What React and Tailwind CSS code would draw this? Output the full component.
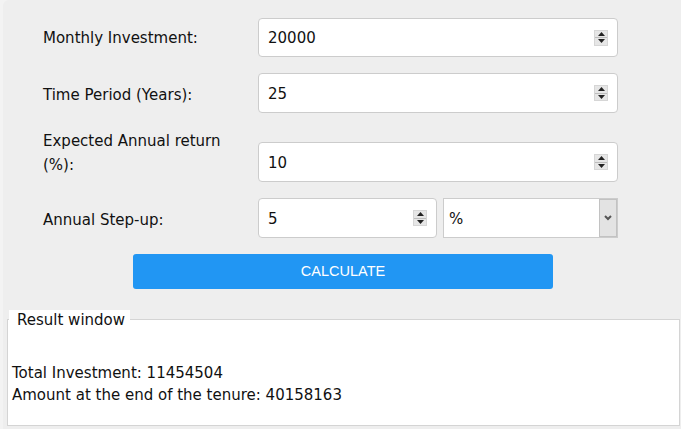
import React, { useState } from 'react';

function Spinner() {
  return (
    <div className="flex flex-col w-[14px] h-[16px] bg-[#e6e6e6] border border-[#d6d6d6]">
      <div className="flex-1 flex items-center justify-center border-b border-[#bdbdbd]">
        <svg width="7" height="4" viewBox="0 0 7 4"><path d="M0 4 L3.5 0 L7 4 Z" fill="#222" /></svg>
      </div>
      <div className="flex-1 flex items-center justify-center">
        <svg width="7" height="4" viewBox="0 0 7 4"><path d="M0 0 L3.5 4 L7 0 Z" fill="#222" /></svg>
      </div>
    </div>
  );
}

function NumberBox({ value, className = '' }) {
  return (
    <div className={`h-10 bg-white border border-[#cccccc] rounded-[4px] flex items-center pl-[9px] pr-[9px] ${className}`}>
      <span className="flex-1 pt-[2px] text-[15px] text-[#111]">{value}</span>
      <Spinner />
    </div>
  );
}

export default function App() {
  const [result] = useState({ total: 11454504, amount: 40158163 });

  return (
    <div className="w-[681px] h-[429px] bg-[#f3f3f3] pl-[3px] overflow-hidden" style={{ fontFamily: '"DejaVu Sans", Verdana, sans-serif' }}>
      <div className="h-full bg-[#eeeeee] rounded-tl-[6px] pt-[18px]">
        {/* FORM */}
        <div className="flex flex-col gap-4 pl-[40px] pr-[63px]">
          <div className="flex items-center">
            <label className="w-[215px] pt-[2px] text-[15px] text-[#111]">Monthly Investment:</label>
            <NumberBox value="20000" className="flex-1 h-[39px]" />
          </div>
          <div className="flex items-center">
            <label className="w-[215px] pt-[4px] text-[15px] text-[#111]">Time Period (Years):</label>
            <NumberBox value="25" className="flex-1" />
          </div>
          <div className="flex items-start">
            <label className="w-[215px] pr-[28px] text-[15px] leading-[24px] text-[#111]">Expected Annual return (%):</label>
            <NumberBox value="10" className="flex-1 mt-[13px]" />
          </div>
          <div className="flex items-center">
            <label className="w-[215px] pt-[4px] text-[15px] text-[#111]">Annual Step-up:</label>
            <NumberBox value="5" className="w-[179px]" />
            <div className="ml-[6px] flex-1 h-10 bg-white border border-[#cccccc] flex items-center">
              <span className="flex-1 pl-[5px] pt-[2px] text-[15px] text-[#111]">%</span>
              <div className="w-[18px] h-full bg-[#e3e3e3] border border-[#c2c2c2] flex items-center justify-center">
                <svg width="8" height="6" viewBox="0 0 8 6"><path d="M1 1 L4 4 L7 1" stroke="#555" strokeWidth="2" fill="none" /></svg>
              </div>
            </div>
          </div>
        </div>

        <div className="pl-[130px] mt-4">
          <button className="w-[420px] h-[35px] bg-[#2196f3] rounded-[3px] text-white text-[14.5px]" style={{ fontFamily: '"Liberation Sans", Arial, sans-serif' }}>
            CALCULATE
          </button>
        </div>

        {/* RESULT */}
        <div className="relative mt-[30px] ml-[4px] mr-[1px] h-[107px] bg-white border border-[#d4d4d4]">
          <span className="absolute left-[1px] top-[-10px] bg-white pl-[8px] pr-[5px] text-[15px] leading-[20px] text-[#111]">Result window</span>
          <div className="pt-[42px] pl-[4px] text-[15px] leading-[22px] text-[#111]">
            <p>Total Investment: {result.total}</p>
            <p>Amount at the end of the tenure: {result.amount}</p>
          </div>
        </div>
      </div>
    </div>
  );
}
